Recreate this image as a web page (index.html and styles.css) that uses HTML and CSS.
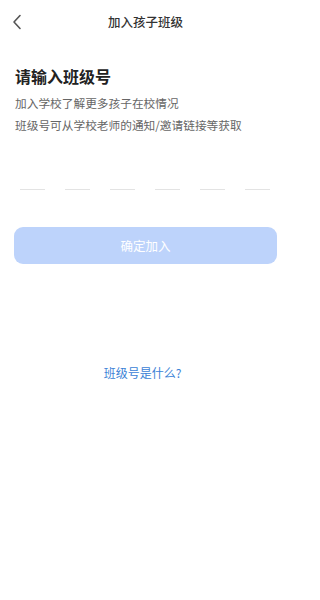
FILE: index.html
```html
<!DOCTYPE html>
<html lang="zh">
<head>
<meta charset="utf-8">
<link rel="stylesheet" href="styles.css">
</head>
<body>
<div class="page">
  <header class="nav">
    <span class="back">
      <svg width="10" height="16" viewBox="0 0 10 16"><path d="M8 1.5 L2 8 L8 14.5" fill="none" stroke="#555" stroke-width="1.6" stroke-linecap="round" stroke-linejoin="round"/></svg>
    </span>
    <h1 class="nav-title">加入孩子班级</h1>
  </header>
  <section class="intro">
    <h2 class="heading">请输入班级号</h2>
    <p class="desc">加入学校了解更多孩子在校情况</p>
    <p class="desc">班级号可从学校老师的通知/邀请链接等获取</p>
  </section>
  <div class="code-slots">
    <span class="slot"></span><span class="slot"></span><span class="slot"></span><span class="slot"></span><span class="slot"></span><span class="slot"></span>
  </div>
  <button class="join-btn">确定加入</button>
  <a class="help">班级号是什么?</a>
</div>
</body>
</html>
```
FILE: styles.css
```css
* { box-sizing: border-box; margin: 0; padding: 0; }
html, body { background: #fff; }
body {
  font-family: "Noto Sans CJK SC", "Noto Sans", sans-serif;
  color: #333;
}
.page {
  width: 281px;
  height: 600px;
  display: flex;
  flex-direction: column;
}
.nav {
  height: 44px;
  display: flex;
  align-items: center;
  justify-content: center;
  position: relative;
}
.back {
  position: absolute;
  left: 12px;
  top: 14px;
  display: flex;
}
.nav-title {
  font-size: 12.5px;
  font-weight: 500;
  color: #333;
  line-height: 1;
  margin-left: 10px;
}
.intro {
  padding: 22px 15px 0;
}
.heading {
  font-size: 16px;
  font-weight: 700;
  color: #222;
  line-height: 20px;
  margin-bottom: 6px;
}
.desc {
  font-size: 11.7px;
  line-height: 22px;
  color: #666;
}
.code-slots {
  margin-top: 53px;
  padding: 0 11px 0 20px;
  display: flex;
  justify-content: space-between;
}
.slot {
  width: 25px;
  height: 1px;
  background: #e3e3e3;
}
.join-btn {
  margin: 37px 4px 0 14px;
  height: 37px;
  border: none;
  border-radius: 9px;
  background: #bdd3fb;
  color: #fff;
  font-family: inherit;
  font-size: 12.5px;
}
.help {
  margin-top: 100px;
  text-align: center;
  font-size: 12px;
  color: #3b82d6;
  padding-left: 4px;
}
```
